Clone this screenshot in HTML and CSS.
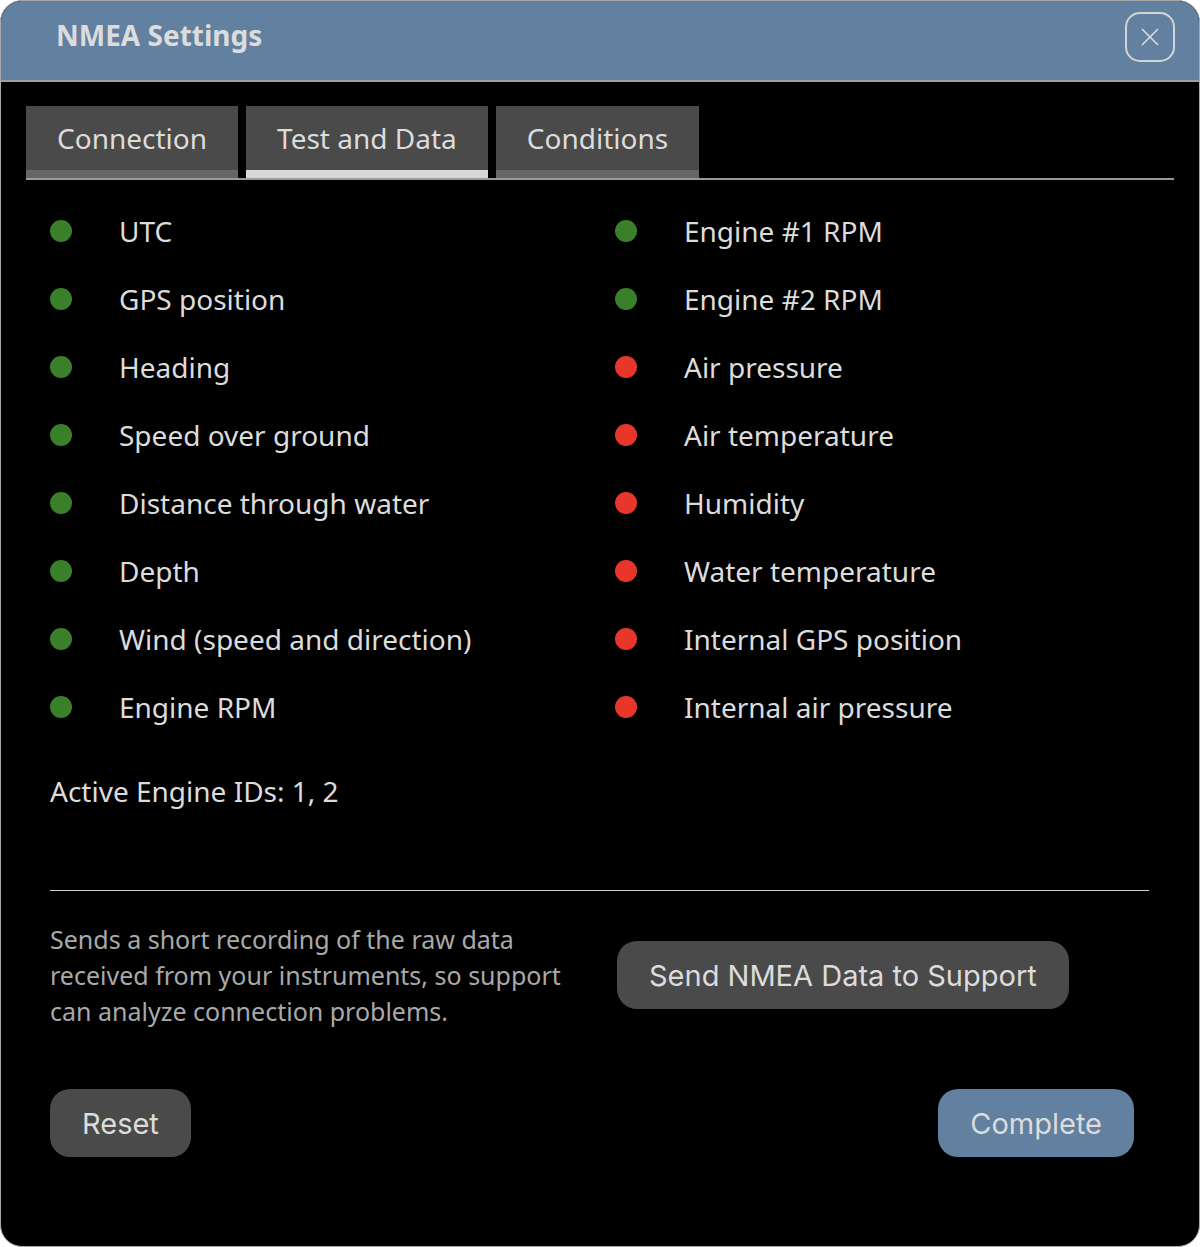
FILE: index.html
```html
<!DOCTYPE html>
<html lang="en">
<head>
    <meta charset="UTF-8">
    <meta name="viewport" content="width=device-width, initial-scale=1.0">
    <title>NMEA Settings</title>
    <link rel="stylesheet" href="styles.css">
</head>
<body>
    <div class="window">
        <header class="window-header">
            <h1 class="window-title">NMEA Settings</h1>
            <button class="close-button" aria-label="Close">
                <svg width="18" height="18" viewBox="0 0 18 18">
                    <path d="M1 1 L17 17 M17 1 L1 17" stroke="#dcdcdc" stroke-width="1.6" fill="none"/>
                </svg>
            </button>
        </header>

        <div class="window-body">
            <nav class="tabs">
                <div class="tab">Connection</div>
                <div class="tab active">Test and Data</div>
                <div class="tab">Conditions</div>
            </nav>

            <div class="content">
                <div class="status-grid">
                    <ul class="status-list">
                        <li class="status-item"><span class="dot ok"></span>UTC</li>
                        <li class="status-item"><span class="dot ok"></span>GPS position</li>
                        <li class="status-item"><span class="dot ok"></span>Heading</li>
                        <li class="status-item"><span class="dot ok"></span>Speed over ground</li>
                        <li class="status-item"><span class="dot ok"></span>Distance through water</li>
                        <li class="status-item"><span class="dot ok"></span>Depth</li>
                        <li class="status-item"><span class="dot ok"></span>Wind (speed and direction)</li>
                        <li class="status-item"><span class="dot ok"></span>Engine RPM</li>
                    </ul>
                    <ul class="status-list">
                        <li class="status-item"><span class="dot ok"></span>Engine #1 RPM</li>
                        <li class="status-item"><span class="dot ok"></span>Engine #2 RPM</li>
                        <li class="status-item"><span class="dot error"></span>Air pressure</li>
                        <li class="status-item"><span class="dot error"></span>Air temperature</li>
                        <li class="status-item"><span class="dot error"></span>Humidity</li>
                        <li class="status-item"><span class="dot error"></span>Water temperature</li>
                        <li class="status-item"><span class="dot error"></span>Internal GPS position</li>
                        <li class="status-item"><span class="dot error"></span>Internal air pressure</li>
                    </ul>
                </div>

                <p class="engine-ids">Active Engine IDs: 1, 2</p>

                <hr class="divider">

                <div class="support-row">
                    <p class="support-text">Sends a short recording of the raw data received from your instruments, so support can analyze connection problems.</p>
                    <div>
                        <button class="btn">Send NMEA Data to Support</button>
                    </div>
                </div>

                <div class="actions">
                    <button class="btn">Reset</button>
                    <button class="btn primary">Complete</button>
                </div>
            </div>
        </div>
    </div>
</body>
</html>
```

FILE: styles.css
```css
body {
    margin: 0;
    padding: 0;
    background-color: #fff;
    font-family: "Noto Sans", Arial, sans-serif;
    color: #dcdcdc;
}

.window {
    width: 1200px;
    height: 1247px;
    box-sizing: border-box;
    border: 1px solid #a8a8a8;
    border-radius: 22px;
    background-color: #000;
    overflow: hidden;
}

/* Заголовок окна */
.window-header {
    height: 79px;
    background-color: #62809f;
    border-bottom: 2px solid #a0a0a0;
    display: flex;
    justify-content: space-between;
    align-items: center;
    padding: 0 24px 0 55px;
}

.window-title {
    margin: 0;
    font-size: 28px;
    font-weight: 700;
    color: #dcdcdc;
    padding-bottom: 12px;
}

.close-button {
    width: 50px;
    height: 50px;
    box-sizing: border-box;
    border: 2px solid #d4d4d4;
    border-radius: 15px;
    background: transparent;
    display: flex;
    align-items: center;
    justify-content: center;
    padding: 0;
    margin-bottom: 8px;
    cursor: pointer;
}

.window-body {
    padding: 24px 25px 0 25px;
}

/* Вкладки */
.tabs {
    display: flex;
    gap: 8px;
    border-bottom: 2px solid #9a9a9a;
}

.tab {
    height: 64px;
    line-height: 64px;
    padding: 0 31px;
    background-color: #4a4a4a;
    border-bottom: 8px solid #666;
    font-size: 28px;
    color: #dcdcdc;
}

.tab.active {
    border-bottom-color: #d8d8d8;
}

.content {
    padding: 17px 25px 0 24px;
}

.status-grid {
    display: grid;
    grid-template-columns: 565px 1fr;
}

.status-list {
    list-style: none;
    margin: 0;
    padding: 0;
}

.status-item {
    height: 68px;
    display: flex;
    align-items: center;
    font-size: 28px;
}

.dot {
    width: 22px;
    height: 22px;
    border-radius: 50%;
    margin-right: 47px;
    flex-shrink: 0;
}

.dot.ok {
    background-color: #3a7f2a;
}

.dot.error {
    background-color: #e8372a;
}

.engine-ids {
    margin: 30px 0 0 0;
    font-size: 28px;
    line-height: 40px;
}

.divider {
    border: none;
    border-top: 1px solid #cfcfcf;
    margin: 79px 0 0 0;
}

.support-row {
    display: grid;
    grid-template-columns: 567px 1fr;
    align-items: center;
    margin-top: 30px;
}

.support-text {
    margin: 0;
    max-width: 530px;
    font-size: 25px;
    line-height: 36px;
    color: #a9a9a9;
}

/* Кнопки */
.btn {
    height: 68px;
    padding: 0 32px;
    border: none;
    border-radius: 20px;
    background-color: #4a4a4a;
    color: #dcdcdc;
    font-family: Inter, "Noto Sans", sans-serif;
    font-size: 29px;
    cursor: pointer;
}

.btn.primary {
    background-color: #62809f;
}

.actions {
    display: flex;
    justify-content: space-between;
    margin-top: 60px;
    padding-right: 15px;
}
```
